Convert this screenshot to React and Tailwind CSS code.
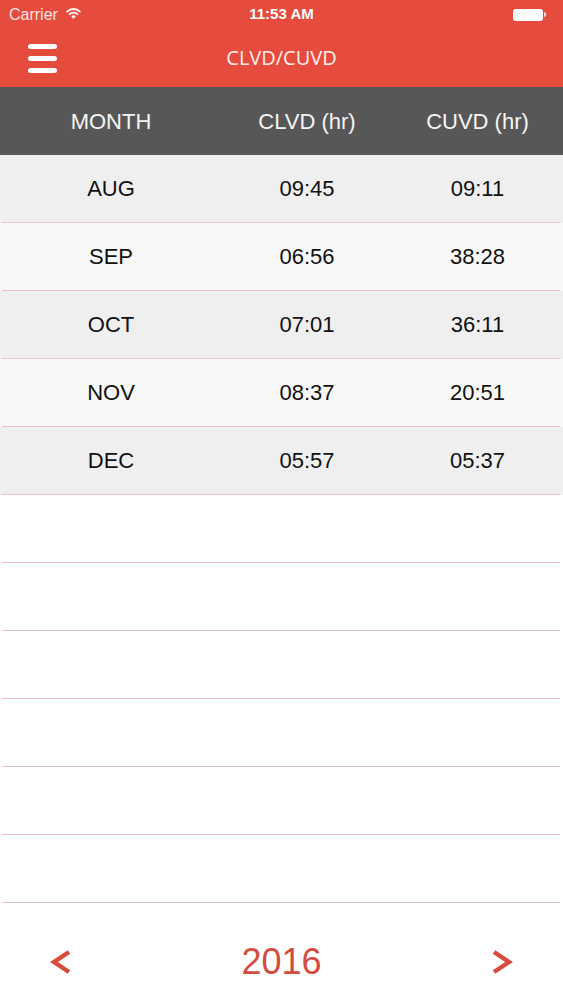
import React from "react";

const rows = [
  { month: "AUG", clvd: "09:45", cuvd: "09:11", bg: "bg-[#efefef]" },
  { month: "SEP", clvd: "06:56", cuvd: "38:28", bg: "bg-[#f8f8f8]" },
  { month: "OCT", clvd: "07:01", cuvd: "36:11", bg: "bg-[#efefef]" },
  { month: "NOV", clvd: "08:37", cuvd: "20:51", bg: "bg-[#f8f8f8]" },
  { month: "DEC", clvd: "05:57", cuvd: "05:37", bg: "bg-[#efefef]" },
];

function Row({ cells, bg }) {
  return (
    <div className={bg}>
      <div className="grid h-[67px] grid-cols-[222px_170px_1fr] items-center text-[22px] text-[#111]">
        {cells.map((c, i) => (
          <div key={i} className="text-center">
            {c}
          </div>
        ))}
      </div>
      <div className="ml-[2px] mr-[3px] h-px bg-[#ebc2c2]"></div>
    </div>
  );
}

export default function App() {
  const empty = Array.from({ length: 6 });

  return (
    <div
      className="flex h-[1000px] w-[563px] flex-col bg-white"
      style={{ fontFamily: '"Liberation Sans", Arial, sans-serif' }}
    >
      {/* status + nav */}
      <div className="bg-[#e54c3e] text-white">
        <div className="relative flex h-[29px] items-center px-[9px] text-[16px]">
          <span className="text-[#fbe4e0]">Carrier</span>
          <svg width="15" height="12" viewBox="0 0 15 12" className="ml-[8px] mt-[-3px]">
            <path d="M1.2 4.6 A9 9 0 0 1 13.8 4.6" stroke="white" strokeWidth="1.9" fill="none" strokeLinecap="round" />
            <path d="M3.6 7.2 A5.5 5.5 0 0 1 11.4 7.2" stroke="white" strokeWidth="1.9" fill="none" strokeLinecap="round" />
            <path d="M7.5 11.8 L5.3 9.5 A3 3 0 0 1 9.7 9.5 Z" fill="white" />
          </svg>
          <span className="absolute left-0 right-0 text-center text-[15px] font-semibold">11:53 AM</span>
          <div className="ml-auto mr-[8px] flex items-center">
            <div className="h-[12px] w-[30px] rounded-[3px] bg-white"></div>
            <div className="ml-[1px] h-[5px] w-[2px] rounded-r-sm bg-white/80"></div>
          </div>
        </div>
        <div className="relative flex h-[58px] items-center">
          <div className="ml-[28px] flex flex-col gap-[7px]">
            <div className="h-[5px] w-[29px] rounded-full bg-white"></div>
            <div className="h-[5px] w-[29px] rounded-full bg-white"></div>
            <div className="h-[5px] w-[29px] rounded-full bg-white"></div>
          </div>
          <div
            className="absolute left-0 right-0 text-center text-[20px] text-[#fdeeea]"
            style={{ fontFamily: '"Open Sans", sans-serif' }}
          >
            CLVD/CUVD
          </div>
        </div>
      </div>

      {/* table header */}
      <div className="grid h-[68px] grid-cols-[222px_170px_1fr] items-center bg-[#575757] text-[22px] text-[#f5f5f5]">
        <div className="text-center">MONTH</div>
        <div className="text-center">CLVD (hr)</div>
        <div className="text-center">CUVD (hr)</div>
      </div>

      {rows.map((r) => (
        <Row key={r.month} bg={r.bg} cells={[r.month, r.clvd, r.cuvd]} />
      ))}
      {empty.map((_, i) => (
        <Row key={i} bg="bg-white" cells={["", "", ""]} />
      ))}

      {/* year switcher */}
      <div className="flex flex-1 items-center justify-between px-[50px] pt-[20px] text-[#d44c40]">
        <svg width="22" height="26" viewBox="0 0 22 26">
          <polyline points="19,3 4,13 19,23" stroke="#d94b3d" strokeWidth="4.5" fill="none" strokeLinejoin="miter" />
        </svg>
        <span className="text-[36px] leading-none">2016</span>
        <svg width="22" height="26" viewBox="0 0 22 26">
          <polyline points="3,3 18,13 3,23" stroke="#d94b3d" strokeWidth="4.5" fill="none" strokeLinejoin="miter" />
        </svg>
      </div>
    </div>
  );
}
